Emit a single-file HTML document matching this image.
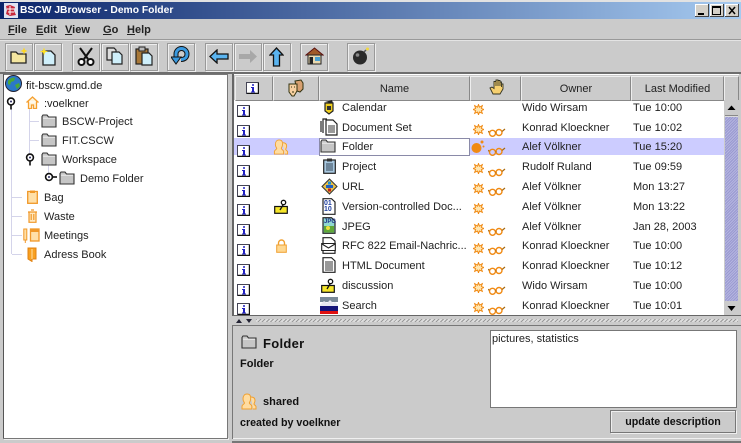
<!DOCTYPE html>
<html><head><meta charset="utf-8"><title>BSCW JBrowser - Demo Folder</title>
<style>
html,body{margin:0;padding:0;background:#cbcbcb;}
#p{position:relative;width:741px;height:443px;overflow:hidden;background:#cbcbcb;font-family:"Liberation Sans",Arial,sans-serif;font-size:11px;color:#222;filter:blur(.35px);}
#p div,#p svg{position:absolute;}
.t{white-space:nowrap;line-height:14px;height:14px;margin-top:1px;}
.b{font-weight:bold;color:#111;}
.btn{width:26px;height:26px;border:1px solid #999;box-shadow:inset 1px 1px 0 #eee,1px 1px 0 #eee;background:#cbcbcb;box-sizing:content-box;top:43px;}
.h{top:76px;height:23px;background:#cbcbcb;border:1px solid #eee;border-right-color:#888;border-bottom-color:#888;text-align:center;line-height:25px;font-size:11px;color:#222;}
#p .m{top:23px;font-size:11px;font-weight:bold;color:#222;margin-top:0;}
</style></head><body><div id="p">
<svg width="0" height="0" style="width:0;height:0"><defs>
<symbol id="info" viewBox="0 0 13 12"><rect x="0.5" y="0.5" width="12" height="11" fill="#fff" stroke="#445"/><path d="M1 11.5H12.5V1" stroke="#111" stroke-width="1.4" fill="none"/><path d="M6 2.2h2v1.6H6zM5 5h3v4.5h1v1H5v-1h1V6H5z" fill="#2020c0"/></symbol>
<symbol id="folder" viewBox="0 0 16 14"><path d="M1 13V2.5L2 1h4l1.5 2H15v10z" fill="#c6c6c6" stroke="#333" stroke-width="1.1"/><path d="M2 4.2h12" stroke="#eee"/></symbol>
<symbol id="star" viewBox="0 0 11 11"><path d="M5.5 .5l1 2.700 2.800-1.500-.9 2.700 2.600 1.100-2.600 1.100.9 2.700-2.800-1.300-1 2.700-1-2.700-2.800 1.300.9-2.700L0 5.500l2.600-1.100-.9-2.700 2.800 1.500z" fill="#ffe6b0" stroke="#f08a14" stroke-width="1"/></symbol>
<symbol id="gl" viewBox="0 0 18 10"><circle cx="4.500" cy="6.300" r="3" fill="none" stroke="#f08a14" stroke-width="1.400"/><circle cx="11" cy="5.500" r="3" fill="none" stroke="#f08a14" stroke-width="1.400"/><path d="M7.500 6l1-.5M14 4.500L17 2M1 5.500L.5 4" stroke="#a86a10" stroke-width="1.200" fill="none"/></symbol>
<symbol id="handle" viewBox="0 0 10 13"><circle cx="5" cy="4.500" r="3.400" fill="#fff" stroke="#111" stroke-width="1.600"/><circle cx="5" cy="4.500" r="1" fill="#2a2a60"/><path d="M5 8v4.500" stroke="#111" stroke-width="1.600"/></symbol>
<symbol id="shared" viewBox="0 0 16 17"><path d="M6 1c3 0 4 2 3.600 5 0 2-1 3-1.300 4 0 1 2 1.500 2.500 3v3H1v-3c.5-1.500 2.500-2 2.500-3C3 9 2 8 2 6 2 3 3.500 1 6 1z" fill="#ffdca0" stroke="#f0a030"/><path d="M10 4c2.500 0 4 1 4 3.500 0 1.500-.8 2.500-1 3.500 0 1 1.500 1 2 2.500V16h-3" fill="#ffdca0" stroke="#f0a030"/></symbol>
<symbol id="disc" viewBox="0 0 14 15"><rect x=".7" y="7.500" width="12.600" height="6.800" fill="#f6e62a" stroke="#111" stroke-width="1.200"/><path d="M6 11l3-5" stroke="#111" stroke-width="1.300"/><circle cx="9.500" cy="3.500" r="2.200" fill="#fff" stroke="#111" stroke-width="1.300"/></symbol>
<symbol id="doc" viewBox="0 0 14 16"><path d="M1 .7h8.500L13 4v11.300H1z" fill="#fff" stroke="#222" stroke-width="1.200"/><path d="M3 5h8M3 7h8M3 9h8M3 11h8M3 13h8" stroke="#333"/></symbol>
</defs></svg>

<!-- title bar -->
<div style="left:0;top:0;width:741px;height:2px;background:#e2e2e2"></div>
<div style="left:0;top:2px;width:741px;height:17px;background:linear-gradient(90deg,#0a246a,#a6caf0)"></div>
<svg style="left:4px;top:3px" width="14" height="15" viewBox="0 0 14 15"><rect width="14" height="15" fill="#dfe3f2"/><path d="M2 3l4-1 5 2-1 4 2 4-6 1-4-2 1-4z" fill="#c8283c"/><path d="M3 6h8M4 9h6M6 3v9" stroke="#fff"/></svg>
<div class="t" style="left:20px;top:4px;margin-top:0;color:#fff;font-weight:bold;font-size:10.300px;">BSCW JBrowser - Demo Folder</div>
<div style="left:695px;top:4px;width:14px;height:13px;background:#d4d0c8;box-shadow:inset -1px -1px 0 #444,inset 1px 1px 0 #fff"></div>
<div style="left:698px;top:13px;width:6px;height:2px;background:#000"></div>
<div style="left:710px;top:4px;width:14px;height:13px;background:#d4d0c8;box-shadow:inset -1px -1px 0 #444,inset 1px 1px 0 #fff"></div>
<div style="left:712px;top:6px;width:7px;height:6px;border:1px solid #000;border-top-width:2px"></div>
<div style="left:725px;top:4px;width:14px;height:13px;background:#d4d0c8;box-shadow:inset -1px -1px 0 #444,inset 1px 1px 0 #fff"></div>
<svg style="left:725px;top:4px" width="14" height="13"><path d="M4 3l6 7M10 3l-6 7" stroke="#000" stroke-width="1.500"/></svg>

<!-- menu -->
<div class="t m" style="left:8px;"><u>F</u>ile</div>
<div class="t m" style="left:36px;"><u>E</u>dit</div>
<div class="t m" style="left:65px;"><u>V</u>iew</div>
<div class="t m" style="left:103px;"><u>G</u>o</div>
<div class="t m" style="left:127px;"><u>H</u>elp</div>
<div style="left:0;top:39px;width:741px;height:1px;background:#999"></div>
<div style="left:0;top:40px;width:741px;height:1px;background:#e4e4e4"></div>

<!-- toolbar -->
<div class="btn" style="left:5px"></div><div class="btn" style="left:34px"></div><div class="btn" style="left:72px"></div><div class="btn" style="left:101px"></div><div class="btn" style="left:130px"></div><div class="btn" style="left:167px"></div><div class="btn" style="left:205px"></div><div class="btn" style="left:234px"></div><div class="btn" style="left:263px"></div><div class="btn" style="left:300px"></div><div class="btn" style="left:347px"></div>
<svg style="left:10px;top:47px" width="18" height="18" viewBox="0 0 18 18"><path d="M1 16V5h5l2 2h8v9z" fill="#f4e6a0" stroke="#222" stroke-width="1.300"/><path d="M14 .5l1 2.500 2.500 1-2.500 1-1 2.500-1-2.500-2.500-1 2.500-1z" fill="#ffd820"/></svg>
<svg style="left:40px;top:47px" width="17" height="19" viewBox="0 0 17 19"><path d="M3 4h8l4 4v10H3z" fill="#cfeffa" stroke="#222" stroke-width="1.300"/><path d="M4 .5l1 3 3 1-3 1-1 3-1-3-3-1 3-1z" fill="#ffe020"/></svg>
<svg style="left:77px;top:47px" width="18" height="19" viewBox="0 0 18 19"><path d="M3 1l8 11M15 1L7 12" stroke="#111" stroke-width="2"/><circle cx="4.500" cy="15" r="3" fill="#fff" stroke="#111" stroke-width="2"/><circle cx="13.500" cy="15" r="3" fill="#fff" stroke="#111" stroke-width="2"/></svg>
<svg style="left:106px;top:47px" width="17" height="18" viewBox="0 0 17 18"><path d="M1 1h7l2 2v10H1z" fill="#ddd" stroke="#222" stroke-width="1.200"/><path d="M6 5h7l3 3v9H6z" fill="#cfeffa" stroke="#222" stroke-width="1.200"/></svg>
<svg style="left:135px;top:46px" width="18" height="20" viewBox="0 0 18 20"><rect x="1" y="3" width="12" height="15" fill="#a87838" stroke="#222" stroke-width="1.200"/><rect x="4" y="1" width="6" height="4" fill="#bbb" stroke="#222"/><path d="M7 7h7l3 3v9H7z" fill="#cfeffa" stroke="#222" stroke-width="1.200"/></svg>
<svg style="left:171px;top:46px" width="20" height="20" viewBox="0 0 20 20"><path d="M5 11V8a5.500 5.500 0 0 1 11 0c0 4-3 5.500-6 5.500" fill="none" stroke="#111" stroke-width="5"/><path d="M5 11V8a5.500 5.500 0 0 1 11 0c0 4-3 5.500-6 5.500" fill="none" stroke="#3a9ae0" stroke-width="3"/><path d="M0 11h10l-5 7z" fill="#3a9ae0" stroke="#111"/></svg>
<svg style="left:209px;top:49px" width="20" height="15" viewBox="0 0 20 15"><path d="M1 7.500L8 1v4h11v5H8v4z" fill="#5ab4f0" stroke="#111" stroke-width="1.300"/></svg>
<svg style="left:238px;top:49px" width="20" height="15" viewBox="0 0 20 15"><path d="M19 7.500L12 1v4H1v5h11v4z" fill="#a8a8a8"/></svg>
<svg style="left:269px;top:47px" width="15" height="20" viewBox="0 0 15 20"><path d="M7.500 1L14 8h-3.500v11h-6V8H1z" fill="#5ab4f0" stroke="#111" stroke-width="1.300"/></svg>
<svg style="left:305px;top:47px" width="19" height="18" viewBox="0 0 19 18"><path d="M1 8L9.500 1 18 8z" fill="#a05a28" stroke="#5a1010"/><rect x="3" y="8" width="13" height="9" fill="#e8d8b0" stroke="#222"/><rect x="4.500" y="10" width="3.500" height="7" fill="#222"/><rect x="10" y="10" width="5" height="4" fill="#4aa0d0"/></svg>
<svg style="left:352px;top:47px" width="18" height="18" viewBox="0 0 18 18"><circle cx="8" cy="10.500" r="7" fill="#2a2a2a"/><circle cx="5.500" cy="8" r="1.800" fill="#888"/><path d="M12 5l2-2" stroke="#555" stroke-width="1.500"/><circle cx="15.500" cy="2" r="1.500" fill="#f0d840"/></svg>
<div style="left:0;top:72px;width:741px;height:2px;background:#6e6e6e"></div>

<!-- tree -->
<div style="left:3px;top:74px;width:223px;height:363px;background:#fff;border:1px solid #777;box-shadow:1px 1px 0 #eee"></div>
<div style="left:3px;top:74px;width:1px;height:364px;background:#555"></div>
<div style="left:11px;top:108px;width:1px;height:146px;background:#d4d4ea"></div>
<div style="left:29px;top:108px;width:1px;height:50px;background:#d4d4ea"></div>
<div style="left:48px;top:165px;width:1px;height:8px;background:#d4d4ea"></div>
<div style="left:30px;top:121px;width:9px;height:1px;background:#d4d4ea"></div>
<div style="left:30px;top:140px;width:9px;height:1px;background:#d4d4ea"></div>
<div style="left:12px;top:197px;width:10px;height:1px;background:#d4d4ea"></div>
<div style="left:12px;top:216px;width:10px;height:1px;background:#d4d4ea"></div>
<div style="left:12px;top:235px;width:10px;height:1px;background:#d4d4ea"></div>
<div style="left:12px;top:254px;width:10px;height:1px;background:#d4d4ea"></div>
<svg style="left:5px;top:75px" width="17" height="17" viewBox="0 0 17 17"><circle cx="8.500" cy="8.500" r="8" fill="#2a78c8" stroke="#223"/><path d="M3 6c2-3 5-4 7-3l-1 3-3 1-1 3-2-1zM10 10l4-2 1 3-3 3z" fill="#4aa838"/></svg>
<div class="t" style="left:26px;top:78px">fit-bscw.gmd.de</div>
<svg style="left:6px;top:97px" width="10" height="13"><use href="#handle"/></svg>
<svg style="left:26px;top:96px" width="13" height="13" viewBox="0 0 13 13"><path d="M.5 6.500L6.500 1l6 5.500M2.500 5.500v7h3V9h2v3.500h3v-7" fill="#fff3d8" stroke="#f5a030" stroke-width="1.300"/></svg>
<div class="t" style="left:44px;top:96px">:voelkner</div>
<svg style="left:41px;top:114px" width="16" height="14"><use href="#folder"/></svg><div class="t" style="left:62px;top:114px">BSCW-Project</div>
<svg style="left:41px;top:133px" width="16" height="14"><use href="#folder"/></svg><div class="t" style="left:62px;top:133px">FIT.CSCW</div>
<svg style="left:25px;top:153px" width="10" height="13"><use href="#handle"/></svg>
<svg style="left:41px;top:152px" width="16" height="14"><use href="#folder"/></svg><div class="t" style="left:62px;top:152px">Workspace</div>
<svg style="left:44px;top:172px" width="13" height="10" viewBox="0 0 13 10"><circle cx="5" cy="5" r="3.400" fill="#fff" stroke="#111" stroke-width="1.600"/><circle cx="5" cy="5" r="1" fill="#2a2a60"/><path d="M8 5h5" stroke="#111" stroke-width="1.600"/></svg>
<svg style="left:59px;top:171px" width="16" height="14"><use href="#folder"/></svg><div class="t" style="left:80px;top:171px">Demo Folder</div>
<svg style="left:27px;top:190px" width="11" height="14" viewBox="0 0 11 14"><rect x=".7" y="1.500" width="9.600" height="11.800" fill="#ffe0a8" stroke="#f09828" stroke-width="1.300"/><rect x="3" y=".5" width="5" height="2.500" fill="#f09828"/></svg><div class="t" style="left:44px;top:190px">Bag</div>
<svg style="left:27px;top:209px" width="11" height="14" viewBox="0 0 11 14"><path d="M1 3h9M2 3v10.300h7V3M4 1h3M4.200 5v6M6.800 5v6" fill="#ffe8c0" stroke="#f09828" stroke-width="1.200"/></svg><div class="t" style="left:44px;top:209px">Waste</div>
<svg style="left:23px;top:228px" width="17" height="15" viewBox="0 0 17 15"><rect x=".8" y="1" width="3" height="11" fill="#ffe0a8" stroke="#f09828"/><path d="M2.300 12v3" stroke="#f09828"/><rect x="7.500" y="1" width="8.500" height="12" fill="#ffe0a8" stroke="#f09828" stroke-width="1.300"/><rect x="7.500" y="1" width="8.500" height="3" fill="#f09828"/></svg><div class="t" style="left:44px;top:228px">Meetings</div>
<svg style="left:27px;top:247px" width="10" height="15" viewBox="0 0 10 15"><path d="M1 1h8v11H5v2.500L1 12z" fill="#f8a020" stroke="#e08010"/><path d="M5 2v10" stroke="#ffe0a8"/></svg><div class="t" style="left:44px;top:247px">Adress Book</div>

<!-- table -->
<div style="left:228px;top:74px;width:4px;height:364px;background:#cbcbcb"></div>
<div style="left:232px;top:74px;width:507px;height:242px;background:#fff;border-left:2px solid #666;box-sizing:border-box"></div>
<div style="left:234px;top:75px;width:505px;height:25px;background:#cbcbcb"></div>
<div class="h" style="left:235px;width:36px"></div>
<div class="h" style="left:273px;width:44px"></div>
<div class="h" style="left:319px;width:149px">Name</div>
<div class="h" style="left:470px;width:49px"></div>
<div class="h" style="left:521px;width:108px">Owner</div>
<div class="h" style="left:631px;width:91px">Last Modified</div>
<div class="h" style="left:724px;width:13px"></div>
<svg style="left:246px;top:82px" width="13" height="12"><use href="#info"/></svg>
<svg style="left:287px;top:79px" width="17" height="18" viewBox="0 0 17 18"><path d="M8 2l6-1 2 3v6l-3 3-3-1z" fill="#d8a070" stroke="#331"/><path d="M2 5h8v7l-3 5H5l-3-4z" fill="#f8d0a0" stroke="#331"/><path d="M4 8h1M7 8h1M5 13h2" stroke="#331"/></svg>
<svg style="left:489px;top:79px" width="15" height="17" viewBox="0 0 15 17"><path d="M1 9l3 6h7l3-5V5h-1.500v3-5H11v4-5.500H9V7V1H7v6V2.500H5v7L3 8z" fill="#f6d070" stroke="#332" stroke-width=".9"/></svg>

<!-- selected row -->
<div style="left:234px;top:138px;width:490px;height:17px;background:#ccccff"></div>
<div style="left:319px;top:138px;width:149px;height:16px;background:#fff;border:1px solid #8a8aa8"></div>

<!-- name column icons -->
<svg style="left:322px;top:100px" width="14" height="15" viewBox="0 0 14 15"><path d="M3 2l7-2 1 3z" fill="#222"/><path d="M3 3h8v8l-4 3-4-3z" fill="#f0d020" stroke="#222" stroke-width="1.200"/><path d="M5 6h4v4H5z" fill="#333"/></svg>
<svg style="left:320px;top:118px" width="18" height="18" viewBox="0 0 18 18"><path d="M1 14V3M3 15V1h4" fill="none" stroke="#222" stroke-width="1.200"/><path d="M6 2h7l4 4v11H6z" fill="#fff" stroke="#222" stroke-width="1.200"/><path d="M8 8h7M8 10h7M8 12h7M8 14h7" stroke="#333"/></svg>
<svg style="left:320px;top:139px" width="16" height="14"><use href="#folder"/></svg>
<svg style="left:323px;top:158px" width="13" height="16" viewBox="0 0 13 16"><rect x=".7" y="2" width="11.600" height="13.300" fill="#a8c8e0" stroke="#222" stroke-width="1.200"/><rect x="4" y=".5" width="5" height="3" fill="#333"/><path d="M3 6h7M3 8h7M3 10h7M3 12h7" stroke="#345"/></svg>
<svg style="left:321px;top:178px" width="17" height="17" viewBox="0 0 17 17"><path d="M8.500 1L16 8.500 8.500 16 1 8.500z" fill="#e8c048" stroke="#333"/><path d="M5 8.500h7" stroke="#2060c0" stroke-width="3"/><path d="M8.500 3.500v3" stroke="#2090d0" stroke-width="3"/><path d="M8.500 10.500v3" stroke="#c02020" stroke-width="3"/></svg>
<svg style="left:322px;top:198px" width="14" height="17" viewBox="0 0 14 17"><path d="M1 .7h8.500L13 4v12.300H1z" fill="#fff" stroke="#222" stroke-width="1.200"/></svg>
<div class="t" style="left:324px;top:200px;font-size:7px;line-height:6px;font-weight:bold;color:#2040a0;width:10px;height:12px;white-space:normal">01<br>10</div>
<svg style="left:322px;top:217px" width="14" height="17" viewBox="0 0 14 17"><path d="M1 .7h8.500L13 4v12.300H1z" fill="#90d8d0" stroke="#222" stroke-width="1.200"/><path d="M2 9h10v6.500H2z" fill="#60a838"/><circle cx="6" cy="11" r="2" fill="#f0e040"/></svg>
<div class="t" style="left:324px;top:218px;font-size:6px;line-height:7px;font-weight:bold;color:#20308a;height:8px">JPG</div>
<svg style="left:321px;top:237px" width="15" height="17" viewBox="0 0 15 17"><path d="M2 .7h8L14 4v12.300H2z" fill="#fff" stroke="#222" stroke-width="1.200"/><path d="M.7 6.500h13.600v7H.7zM1 7l6.500 4L14 7" fill="#fff" stroke="#222" stroke-width="1.100"/></svg>
<svg style="left:322px;top:257px" width="14" height="16"><use href="#doc"/></svg>
<svg style="left:321px;top:278px" width="14" height="15"><use href="#disc"/></svg>
<svg style="left:320px;top:297px" width="18" height="17" viewBox="0 0 18 17"><rect width="18" height="5" fill="#7a8a98"/><path d="M0 8l4-4 3 2 3-3 3 3 2-1 3 3v4H0z" fill="#e8e8f0"/><rect y="9" width="18" height="5" fill="#141478"/><rect y="14" width="18" height="3" fill="#e01010"/></svg>

<!-- col 2 icons -->
<svg style="left:273px;top:139px" width="16" height="16"><use href="#shared"/></svg>
<svg style="left:274px;top:199px" width="14" height="15"><use href="#disc"/></svg>
<svg style="left:276px;top:239px" width="11" height="14" viewBox="0 0 11 14"><path d="M2.500 6V4a3 3 0 0 1 6 0v2" fill="none" stroke="#f0a030" stroke-width="1.400"/><rect x=".7" y="6" width="9.600" height="7.300" fill="#ffd890" stroke="#f0a030"/></svg>

<!-- status icons -->
<svg style="left:473px;top:104px" width="11" height="11"><use href="#star"/></svg>
<svg style="left:473px;top:124px" width="11" height="11"><use href="#star"/></svg><svg style="left:488px;top:127px" width="18" height="10"><use href="#gl"/></svg>
<svg style="left:471px;top:139px" width="14" height="15" viewBox="0 0 14 15"><circle cx="5.500" cy="9" r="5" fill="#f08a14"/><circle cx="11" cy="3" r="1.500" fill="#f08a14"/><circle cx="12.500" cy="7.500" r="1" fill="#f08a14"/></svg><svg style="left:488px;top:146px" width="18" height="10"><use href="#gl"/></svg>
<svg style="left:473px;top:163px" width="11" height="11"><use href="#star"/></svg><svg style="left:488px;top:167px" width="18" height="10"><use href="#gl"/></svg>
<svg style="left:473px;top:183px" width="11" height="11"><use href="#star"/></svg><svg style="left:488px;top:186px" width="18" height="10"><use href="#gl"/></svg>
<svg style="left:473px;top:203px" width="11" height="11"><use href="#star"/></svg>
<svg style="left:473px;top:223px" width="11" height="11"><use href="#star"/></svg><svg style="left:488px;top:226px" width="18" height="10"><use href="#gl"/></svg>
<svg style="left:473px;top:243px" width="11" height="11"><use href="#star"/></svg><svg style="left:488px;top:245px" width="18" height="10"><use href="#gl"/></svg>
<svg style="left:473px;top:262px" width="11" height="11"><use href="#star"/></svg><svg style="left:488px;top:265px" width="18" height="10"><use href="#gl"/></svg>
<svg style="left:473px;top:282px" width="11" height="11"><use href="#star"/></svg><svg style="left:488px;top:285px" width="18" height="10"><use href="#gl"/></svg>
<svg style="left:473px;top:302px" width="11" height="11"><use href="#star"/></svg><svg style="left:488px;top:305px" width="18" height="10"><use href="#gl"/></svg>

<!-- info icons -->
<svg style="left:237px;top:105px" width="13" height="12"><use href="#info"/></svg>
<svg style="left:237px;top:125px" width="13" height="12"><use href="#info"/></svg>
<svg style="left:237px;top:145px" width="13" height="12"><use href="#info"/></svg>
<svg style="left:237px;top:165px" width="13" height="12"><use href="#info"/></svg>
<svg style="left:237px;top:185px" width="13" height="12"><use href="#info"/></svg>
<svg style="left:237px;top:204px" width="13" height="12"><use href="#info"/></svg>
<svg style="left:237px;top:224px" width="13" height="12"><use href="#info"/></svg>
<svg style="left:237px;top:244px" width="13" height="12"><use href="#info"/></svg>
<svg style="left:237px;top:264px" width="13" height="12"><use href="#info"/></svg>
<svg style="left:237px;top:284px" width="13" height="12"><use href="#info"/></svg>
<svg style="left:237px;top:303px" width="13" height="12"><use href="#info"/></svg>

<!-- rows text -->
<div class="t" style="left:342px;top:100px">Calendar</div><div class="t" style="left:522px;top:100px">Wido Wirsam</div><div class="t" style="left:633px;top:100px">Tue 10:00</div>
<div class="t" style="left:342px;top:120px">Document Set</div><div class="t" style="left:522px;top:120px">Konrad Kloeckner</div><div class="t" style="left:633px;top:120px">Tue 10:02</div>
<div class="t" style="left:342px;top:139px">Folder</div><div class="t" style="left:522px;top:139px">Alef Völkner</div><div class="t" style="left:633px;top:139px">Tue 15:20</div>
<div class="t" style="left:342px;top:159px">Project</div><div class="t" style="left:522px;top:159px">Rudolf Ruland</div><div class="t" style="left:633px;top:159px">Tue 09:59</div>
<div class="t" style="left:342px;top:179px">URL</div><div class="t" style="left:522px;top:179px">Alef Völkner</div><div class="t" style="left:633px;top:179px">Mon 13:27</div>
<div class="t" style="left:342px;top:199px">Version-controlled Doc...</div><div class="t" style="left:522px;top:199px">Alef Völkner</div><div class="t" style="left:633px;top:199px">Mon 13:22</div>
<div class="t" style="left:342px;top:219px">JPEG</div><div class="t" style="left:522px;top:219px">Alef Völkner</div><div class="t" style="left:633px;top:219px">Jan 28, 2003</div>
<div class="t" style="left:342px;top:238px">RFC 822 Email-Nachric...</div><div class="t" style="left:522px;top:238px">Konrad Kloeckner</div><div class="t" style="left:633px;top:238px">Tue 10:00</div>
<div class="t" style="left:342px;top:258px">HTML Document</div><div class="t" style="left:522px;top:258px">Konrad Kloeckner</div><div class="t" style="left:633px;top:258px">Tue 10:12</div>
<div class="t" style="left:342px;top:278px">discussion</div><div class="t" style="left:522px;top:278px">Wido Wirsam</div><div class="t" style="left:633px;top:278px">Tue 10:00</div>
<div class="t" style="left:342px;top:298px">Search</div><div class="t" style="left:522px;top:298px">Konrad Kloeckner</div><div class="t" style="left:633px;top:298px">Tue 10:01</div>

<!-- scrollbar -->
<div style="left:724px;top:100px;width:15px;height:216px;background:#cbcbcb"></div>
<div style="left:725px;top:116px;width:13px;height:185px;background:repeating-linear-gradient(135deg,#9a9ad0 0 1px,#b4b4e0 1px 2px);border:0;box-shadow:inset 0 1px 0 #ddd"></div>
<div style="left:725px;top:101px;width:13px;height:14px;background:#cbcbcb;border-bottom:1px solid #888"></div>
<svg style="left:725px;top:101px" width="13" height="14"><path d="M2.500 9h8L6.500 4.500z" fill="#000"/></svg>
<div style="left:725px;top:302px;width:13px;height:13px;background:#cbcbcb"></div>
<svg style="left:725px;top:302px" width="13" height="13"><path d="M2.500 4h8L6.500 9z" fill="#000"/></svg>

<!-- divider -->
<div style="left:232px;top:315px;width:509px;height:1px;background:#666"></div>
<div style="left:233px;top:316px;width:508px;height:9px;background:#cbcbcb"></div>
<div style="left:256px;top:319px;width:482px;height:3px;background:repeating-linear-gradient(135deg,#999 0 1px,#ddd 1px 3px)"></div>
<svg style="left:235px;top:318px" width="20" height="6"><path d="M1 5h6L4 1zM11 1h6l-3 4z" fill="#223"/></svg>
<div style="left:232px;top:325px;width:509px;height:1px;background:#777"></div>

<!-- detail panel -->
<svg style="left:241px;top:335px" width="16" height="14"><use href="#folder"/></svg>
<div class="t b" style="left:263px;top:336px;font-size:13px;letter-spacing:.3px">Folder</div>
<div class="t b" style="left:240px;top:356px">Folder</div>
<svg style="left:241px;top:393px" width="16" height="17"><use href="#shared"/></svg>
<div class="t b" style="left:263px;top:394px">shared</div>
<div class="t b" style="left:240px;top:415px;font-size:10.700px">created by voelkner</div>
<div style="left:490px;top:330px;width:245px;height:76px;background:#fff;border:1px solid #777"></div>
<div class="t" style="left:492px;top:331px">pictures, statistics</div>
<div style="left:610px;top:410px;width:124px;height:21px;border:1px solid #777;box-shadow:inset 1px 1px 0 #eee,1px 1px 0 #eee;text-align:center;line-height:23px;font-weight:bold;font-size:10.700px;color:#111">update description</div>
<div style="left:232px;top:438px;width:509px;height:1px;background:#f0f0f0"></div>
<div style="left:232px;top:325px;width:1px;height:114px;background:#777"></div>
<div style="left:232px;top:441px;width:509px;height:2px;background:#777"></div>
<div style="left:0;top:441px;width:232px;height:2px;background:#cbcbcb"></div>
</div></body></html>
